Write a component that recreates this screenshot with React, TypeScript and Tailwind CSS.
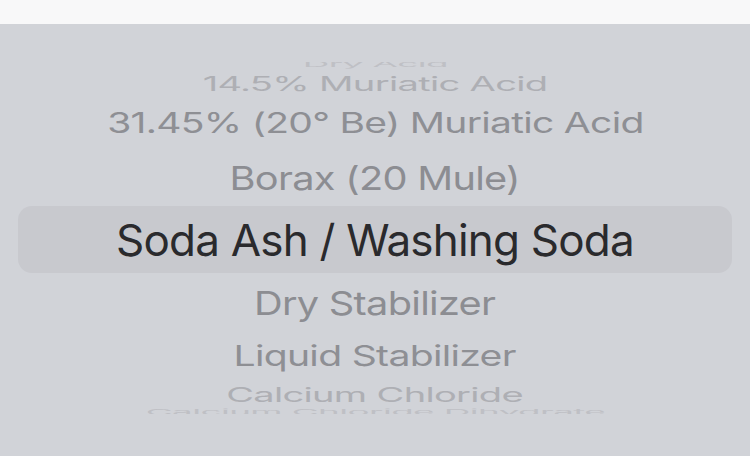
import React from "react";

type Row = { label: string; h: string; text: string; tf: string };

const rows: Row[] = [
  { label: "Dry Acid", h: "h-[15px]", text: "text-[#bfc0c5]", tf: "scale-x-[0.84] scale-y-[0.17]" },
  { label: "14.5% Muriatic Acid", h: "h-[25px]", text: "text-[#aeafb4]", tf: "scale-x-[0.866] scale-y-[0.44]" },
  { label: "31.45% (20° Be) Muriatic Acid", h: "h-[53px]", text: "text-[#8e8f94]", tf: "scale-x-[0.887] scale-y-[0.64]" },
  { label: "Borax (20 Mule)", h: "h-[57px]", text: "text-[#8c8d92]", tf: "scale-x-[0.903] scale-y-[0.75]" },
];

const rowsBelow: Row[] = [
  { label: "Dry Stabilizer", h: "h-[59px]", text: "text-[#8c8d92]", tf: "scale-x-[0.903] scale-y-[0.75]" },
  { label: "Liquid Stabilizer", h: "h-[47px]", text: "text-[#8e8f94]", tf: "scale-x-[0.89] scale-y-[0.65]" },
  { label: "Calcium Chloride", h: "h-[31px]", text: "text-[#aeafb4]", tf: "scale-x-[0.865] scale-y-[0.44]" },
  { label: "Calcium Chloride Dihydrate", h: "h-[3px]", text: "text-[#bfc0c5]", tf: "scale-x-[0.84] scale-y-[0.17]" },
];

function WheelRow({ r }: { r: Row }) {
  return (
    <div className={`${r.h} flex items-center justify-center`}>
      <span className={`whitespace-nowrap text-[44px] leading-none tracking-[-0.8px] ${r.text} ${r.tf}`}>
        {r.label}
      </span>
    </div>
  );
}

export default function App() {
  return (
    <div className="w-[750px] h-[456px] flex flex-col overflow-hidden font-['Inter','Noto_Sans',sans-serif]">
      <div className="h-[24px] bg-[#f8f8f9]" />
      <div className="flex-1 bg-[#d1d3d8] pt-[38px]">
        <div className="h-[352px] overflow-hidden">
          <div className="-mt-[6px] flex flex-col">
            {rows.map((r) => (
              <WheelRow key={r.label} r={r} />
            ))}
            <div className="mx-[18px] h-[67px] rounded-[14px] bg-[#c8c9ce] flex items-center justify-center">
              <span className="whitespace-nowrap text-[44px] leading-none tracking-[-0.8px] text-[#2a2a2d]">
                Soda Ash / Washing Soda
              </span>
            </div>
            {rowsBelow.map((r) => (
              <WheelRow key={r.label} r={r} />
            ))}
          </div>
        </div>
      </div>
    </div>
  );
}
